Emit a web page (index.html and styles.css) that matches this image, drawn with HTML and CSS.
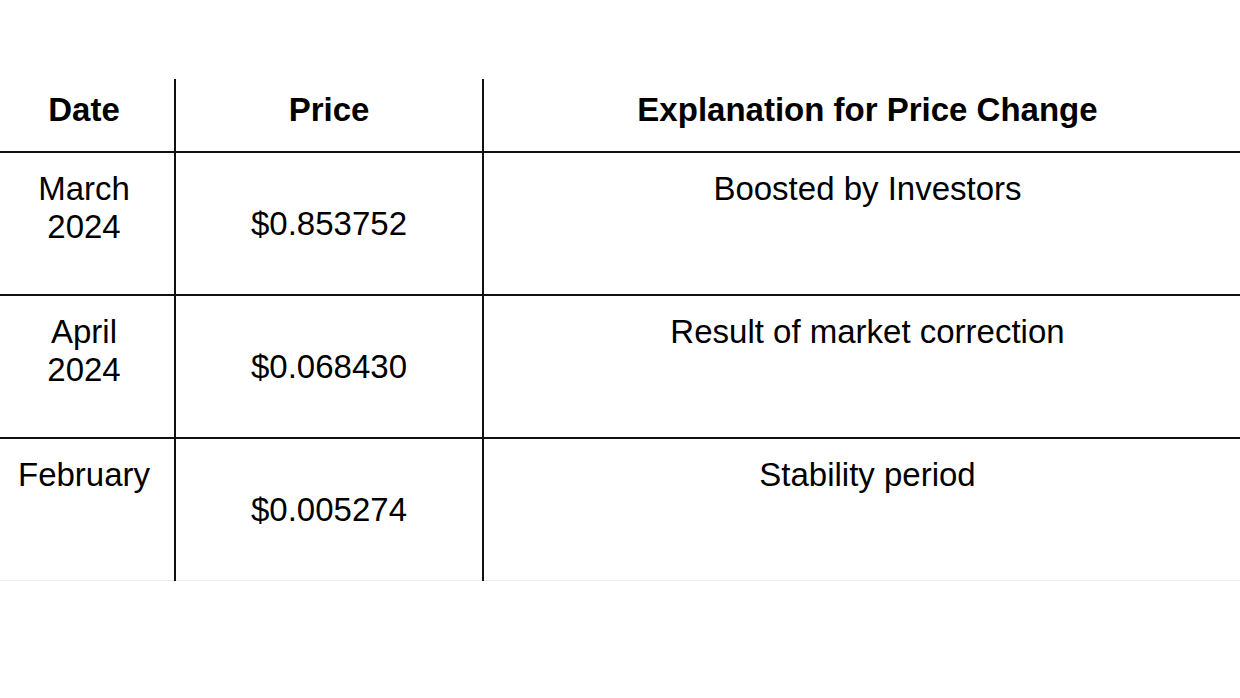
FILE: index.html
```html
<!DOCTYPE html>
<html lang="en">
<head>
<meta charset="utf-8">
<title>Price history</title>
<link rel="stylesheet" href="styles.css">
</head>
<body>
<table class="price-table">
  <colgroup>
    <col class="col-date">
    <col class="col-price">
    <col class="col-expl">
  </colgroup>
  <thead>
    <tr class="head-row">
      <th>Date</th>
      <th>Price</th>
      <th>Explanation for Price Change</th>
    </tr>
  </thead>
  <tbody>
    <tr class="body-row">
      <td class="date">March<br>2024</td>
      <td class="price">$0.853752</td>
      <td class="expl">Boosted by Investors</td>
    </tr>
    <tr class="body-row">
      <td class="date">April<br>2024</td>
      <td class="price">$0.068430</td>
      <td class="expl">Result of market correction</td>
    </tr>
    <tr class="body-row last">
      <td class="date">February</td>
      <td class="price">$0.005274</td>
      <td class="expl">Stability period</td>
    </tr>
  </tbody>
</table>
</body>
</html>
```

FILE: styles.css
```css
html, body {
  margin: 0;
  padding: 0;
  background: #ffffff;
}

body {
  font-family: "Liberation Sans", Arial, sans-serif;
  color: #000000;
  overflow: hidden;
}

.price-table {
  margin-top: 79px;
  margin-left: -6px;
  width: 1257px;
  table-layout: fixed;
  border-collapse: collapse;
  font-size: 33px;
  line-height: 38px;
}

.col-date { width: 181px; }
.col-price { width: 308px; }
.col-expl { width: 768px; }

.price-table th,
.price-table td {
  border-left: 2px solid #111;
  border-right: 2px solid #111;
  text-align: center;
  padding: 0 2px;
}

.price-table tr > :first-child { border-left: none; }
.price-table tr > :last-child { border-right: none; }

.price-table .head-row th {
  height: 60px;
  font-weight: bold;
  vertical-align: top;
  padding-top: 12px;
  border-bottom: 2px solid #111;
}

.price-table .body-row td {
  height: 124px;
  border-bottom: 2px solid #111;
}

.price-table .body-row.last td {
  border-bottom: 1px solid #ececec;
}

.price-table td.date,
.price-table td.expl {
  vertical-align: top;
  padding-top: 17px;
}

.price-table td.price {
  vertical-align: middle;
  padding-top: 0;
  padding-bottom: 0;
}
```
